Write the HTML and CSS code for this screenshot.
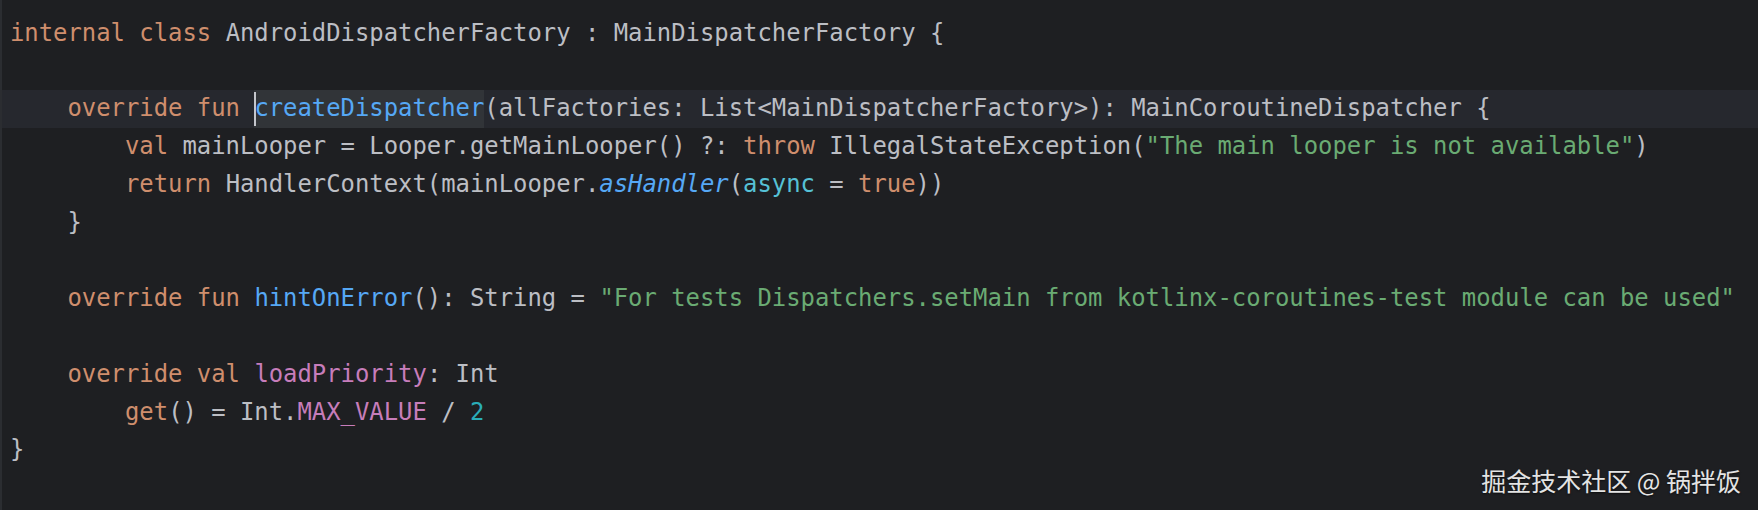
FILE: index.html
```html
<!DOCTYPE html>
<html lang="zh">
<head>
<meta charset="utf-8">
<title>AndroidDispatcherFactory</title>
<link rel="stylesheet" href="styles.css">
</head>
<body>
<main class="editor">
<div class="code">
<div class="line"><span class="kw">internal class </span>AndroidDispatcherFactory : MainDispatcherFactory {</div>
<div class="line"> </div>
<div class="line current">    <span class="kw">override fun </span><span class="caret"></span><span class="fn usage">createDispatcher</span>(allFactories: List&lt;MainDispatcherFactory&gt;): MainCoroutineDispatcher {</div>
<div class="line">        <span class="kw">val </span>mainLooper = Looper.getMainLooper() ?: <span class="kw">throw </span>IllegalStateException(<span class="str">"The main looper is not available"</span>)</div>
<div class="line">        <span class="kw">return </span>HandlerContext(mainLooper.<span class="fn ext">asHandler</span>(<span class="named">async</span> = <span class="kw">true</span>))</div>
<div class="line">    }</div>
<div class="line"> </div>
<div class="line">    <span class="kw">override fun </span><span class="fn">hintOnError</span>(): String = <span class="str">"For tests Dispatchers.setMain from kotlinx-coroutines-test module can be used"</span></div>
<div class="line"> </div>
<div class="line">    <span class="kw">override val </span><span class="prop">loadPriority</span>: Int</div>
<div class="line">        <span class="kw">get</span>() = Int.<span class="prop">MAX_VALUE</span> / <span class="num">2</span></div>
<div class="line">}</div>
</div>
<div class="watermark">掘金技术社区 @ 锅拌饭</div>
</main>
</body>
</html>
```
FILE: styles.css
```css
html, body {
  margin: 0;
  padding: 0;
  background: #1e1f22;
}

.editor {
  position: relative;
  width: 1758px;
  height: 510px;
  box-sizing: border-box;
  border-left: 2px solid #2b2d31;
  background: #1e1f22;
  overflow: hidden;
}

.code {
  padding-top: 14.6px;
  font-family: "DejaVu Sans Mono", "Liberation Mono", monospace;
  font-size: 23.88px;
  color: #bcbec4;
}

.line {
  height: 37.9px;
  line-height: 37.9px;
  padding-left: 8px;
  white-space: pre;
}

.line.current {
  background: #26282e;
}

.kw { color: #cf8e6d; }
.fn { color: #56a8f5; }
.ext { font-style: italic; }
.str { color: #6aab73; }
.num { color: #2aacb8; }
.prop { color: #c77dbb; }
.named { color: #56c1d6; }

.usage {
  display: inline-block;
  background: #313438;
}

.caret {
  display: inline-block;
  width: 0;
  height: 37.9px;
  vertical-align: top;
  position: relative;
}

.caret::before {
  content: "";
  position: absolute;
  left: 0;
  top: 2px;
  width: 2px;
  height: 34px;
  background: #c4c6cc;
  z-index: 1;
}

.watermark {
  position: absolute;
  right: 17px;
  bottom: 14px;
  font-family: "Noto Sans CJK SC", "Noto Sans", sans-serif;
  font-size: 25px;
  line-height: 32px;
  color: #e4e4e4;
  text-shadow: 0 1px 2px rgba(0, 0, 0, 0.6);
}
```
